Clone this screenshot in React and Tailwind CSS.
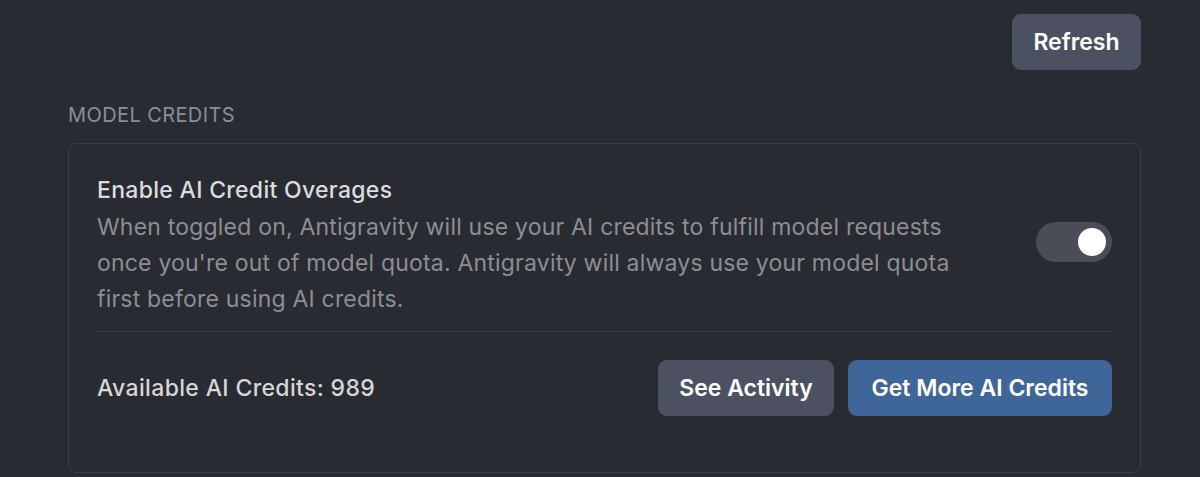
export default function App() {
  return (
    <div
      className="w-[1200px] h-[477px] overflow-hidden bg-[#292b32] pl-[68px] pr-[59px] flex flex-col"
      style={{ fontFamily: 'Inter, "Noto Sans", sans-serif' }}
    >
      <div className="flex justify-end pt-[14px]">
        <button className="h-[56px] w-[129px] rounded-[9px] bg-[#4b5160] text-white text-[23px] font-semibold">
          Refresh
        </button>
      </div>

      <h2 className="mt-[33px] text-[20px] leading-[24px] tracking-[0.4px] text-[#8b8e94]">MODEL CREDITS</h2>

      <section className="mt-[16px] rounded-[8px] border border-[#3b3d44] px-[28px] pt-[32px] pb-[56px]">
        <div className="flex items-center justify-between">
          <div className="w-[880px]">
            <div className="text-[23px] leading-[28px] tracking-[0.3px] font-medium text-[#dcdcdd]">
              Enable AI Credit Overages
            </div>
            <p className="mt-[5px] max-w-[870px] text-[23px] leading-[36px] tracking-[0.2px] text-[#8c8e94]">
              When toggled on, Antigravity will use your AI credits to fulfill model requests once you're out of
              model quota. Antigravity will always use your model quota first before using AI credits.
            </p>
          </div>
          <div className="mb-[9px] h-[40px] w-[76px] rounded-full bg-[#4a4d57] flex items-center justify-end pr-[6px]">
            <span className="h-[28px] w-[28px] rounded-full bg-white" />
          </div>
        </div>

        <div className="mt-[14px] h-px bg-[#3b3d44]" />

        <div className="mt-[28px] flex items-center justify-between">
          <span className="text-[23px] tracking-[0.35px] font-medium text-[#d6d6d8]">Available AI Credits: 989</span>
          <div className="flex gap-[14px]">
            <button className="h-[56px] w-[176px] rounded-[9px] bg-[#4b5160] text-white text-[23px] font-semibold">
              See Activity
            </button>
            <button className="h-[56px] w-[264px] rounded-[9px] bg-[#3f6699] text-white text-[23px] font-semibold">
              Get More AI Credits
            </button>
          </div>
        </div>
      </section>
    </div>
  );
}
